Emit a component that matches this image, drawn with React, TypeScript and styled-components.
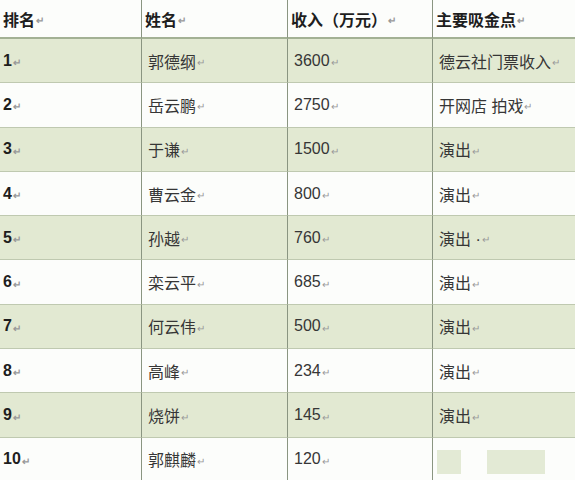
import styled, { createGlobalStyle } from 'styled-components'

const rows = [
  { rank: '1', name: '郭德纲', income: '3600', source: '德云社门票收入' },
  { rank: '2', name: '岳云鹏', income: '2750', source: '开网店 拍戏' },
  { rank: '3', name: '于谦', income: '1500', source: '演出' },
  { rank: '4', name: '曹云金', income: '800', source: '演出' },
  { rank: '5', name: '孙越', income: '760', source: '演出 ·' },
  { rank: '6', name: '栾云平', income: '685', source: '演出' },
  { rank: '7', name: '何云伟', income: '500', source: '演出' },
  { rank: '8', name: '高峰', income: '234', source: '演出' },
  { rank: '9', name: '烧饼', income: '145', source: '演出' },
  { rank: '10', name: '郭麒麟', income: '120', source: '' },
]

const GlobalStyle = createGlobalStyle`
  body {
    margin: 0;
    background: #fdfdfc;
    font-family: "Liberation Sans", "Noto Sans CJK SC", sans-serif;
    overflow: hidden;
  }
`

const Table = styled.div`
  display: grid;
  grid-template-columns: 141px 146px 145px 160px;
  width: 592px;
  color: #3a3a3a;
  font-size: 16px;
`

const Row = styled.div<{ $shade?: boolean; $head?: boolean }>`
  display: contents;
  & > div {
    background: ${(p) => (p.$shade ? '#e2e9d2' : '#fcfdfb')};
    height: ${(p) => (p.$head ? '37px' : '43.3px')};
    border-bottom: ${(p) => (p.$head ? '2px solid #a3b194' : '1px solid #bfc9b0')};
  }
`

const Cell = styled.div<{ $bold?: boolean }>`
  display: flex;
  align-items: center;
  padding-left: ${(p) => (p.$bold ? '3px' : '6px')};
  border-left: 1px solid #8a9581;
  font-weight: ${(p) => (p.$bold ? 700 : 400)};
  color: ${(p) => (p.$bold ? '#1e1e1e' : '#363636')};
  &:first-child {
    border-left: none;
  }
`

const Mark = styled.span`
  font-size: 10px;
  color: #999;
  margin-left: 1px;
  margin-top: 4px;
`

const Smudge = styled.span<{ $w: number; $gap: number }>`
  display: inline-block;
  width: ${(p) => p.$w}px;
  height: 24px;
  margin-left: ${(p) => p.$gap}px;
  margin-top: 6px;
  background: #e3ead5;
`

const Text = ({ t }: { t: string }) => (
  <>
    {t}
    <Mark>↵</Mark>
  </>
)

export default function App() {
  return (
    <>
      <GlobalStyle />
      <Table>
        <Row $head>
          <Cell $bold>
            <Text t="排名" />
          </Cell>
          <Cell $bold>
            <Text t="姓名" />
          </Cell>
          <Cell $bold>
            <Text t="收入（万元）" />
          </Cell>
          <Cell $bold>
            <Text t="主要吸金点" />
          </Cell>
        </Row>
        {rows.map((r, i) => (
          <Row key={r.rank} $shade={i % 2 === 0}>
            <Cell $bold>
              <Text t={r.rank} />
            </Cell>
            <Cell>
              <Text t={r.name} />
            </Cell>
            <Cell>
              <Text t={r.income} />
            </Cell>
            <Cell>
              {r.source ? (
                <Text t={r.source} />
              ) : (
                <>
                  <Smudge $w={24} $gap={-2} />
                  <Smudge $w={58} $gap={26} />
                </>
              )}
            </Cell>
          </Row>
        ))}
      </Table>
    </>
  )
}
